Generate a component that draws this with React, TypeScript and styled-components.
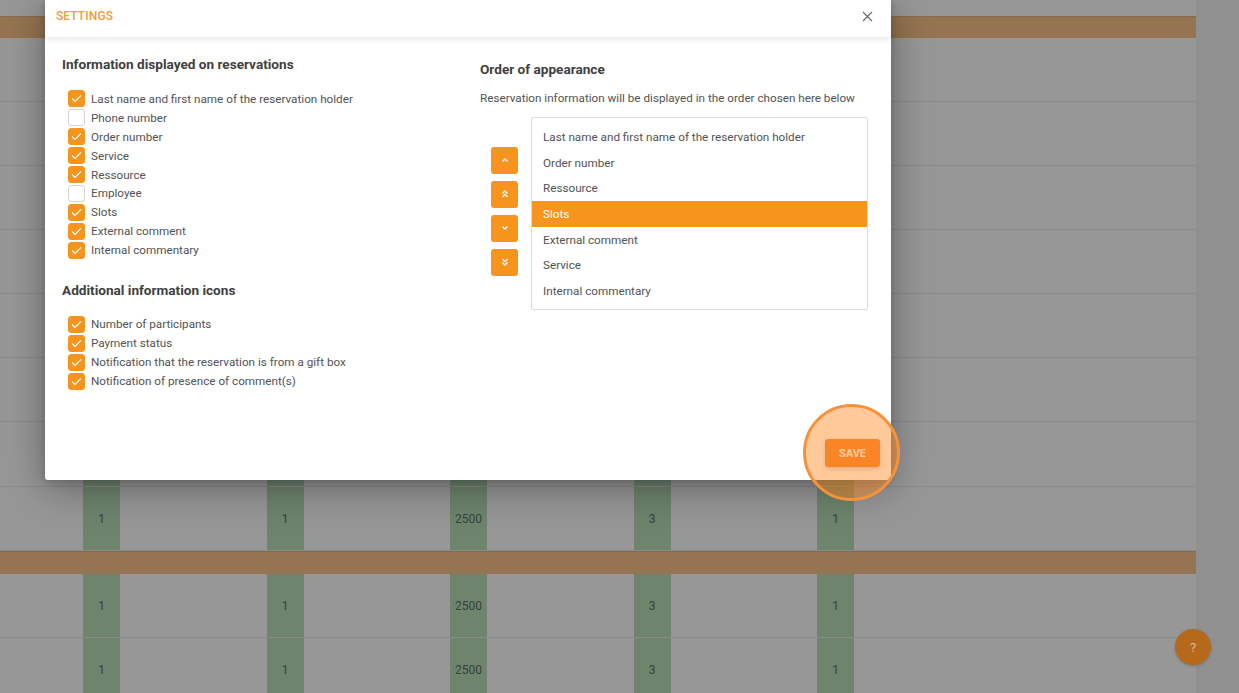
import styled, { createGlobalStyle } from 'styled-components';

const GlobalStyle = createGlobalStyle`
    html, body {
        margin: 0;
        padding: 0;
    }
    body {
        font-family: Roboto, 'Liberation Sans', sans-serif;
        overflow: hidden;
    }
`;

const ORANGE = '#f7941e';

const infoFields = [
    { label: 'Last name and first name of the reservation holder', checked: true },
    { label: 'Phone number', checked: false },
    { label: 'Order number', checked: true },
    { label: 'Service', checked: true },
    { label: 'Ressource', checked: true },
    { label: 'Employee', checked: false },
    { label: 'Slots', checked: true },
    { label: 'External comment', checked: true },
    { label: 'Internal commentary', checked: true },
];

const iconFields = [
    'Number of participants',
    'Payment status',
    'Notification that the reservation is from a gift box',
    'Notification of presence of comment(s)',
];

const order = [
    'Last name and first name of the reservation holder',
    'Order number',
    'Ressource',
    'Slots',
    'External comment',
    'Service',
    'Internal commentary',
];

const rowValues = ['1', '1', '2500', '3', '1'];

// rows hidden behind the dialog keep their cells but show no values
type Row = { kind: 'row' | 'bar'; height: number; hidden?: boolean };

const rows: Row[] = [
    { kind: 'row', height: 64, hidden: true },
    { kind: 'row', height: 64, hidden: true },
    { kind: 'row', height: 64, hidden: true },
    { kind: 'row', height: 64, hidden: true },
    { kind: 'row', height: 64, hidden: true },
    { kind: 'row', height: 64, hidden: true },
    { kind: 'row', height: 65, hidden: true },
    { kind: 'row', height: 64 },
    { kind: 'bar', height: 23 },
    { kind: 'row', height: 64 },
    { kind: 'row', height: 64 },
];

const Check = () => (
    <svg width="11" height="9" viewBox="0 0 11 9">
        <polyline points="1,4.5 4,7.5 10,1.5" fill="none" stroke="#fff" strokeWidth="1.1" />
    </svg>
);

const Chevron = ({ dir, double }: { dir: 'up' | 'down'; double?: boolean }) => {
    const flip = dir === 'down' ? 'scale(1,-1) translate(0,-10)' : undefined;
    return (
        <svg width="8" height="10" viewBox="0 0 8 10">
            <g transform={flip} fill="none" stroke="#fff" strokeWidth="1.3">
                {double ? (
                    <>
                        <polyline points="1.5,4.5 4,2 6.5,4.5" />
                        <polyline points="1.5,8 4,5.5 6.5,8" />
                    </>
                ) : (
                    <polyline points="1.5,6.5 4,4 6.5,6.5" />
                )}
            </g>
        </svg>
    );
};

const App = () => {
    return (
        <Page>
            <GlobalStyle />
            <Board>
                <TopGap />
                <Bar $height={22} />
                {rows.map((row, i) =>
                    row.kind === 'bar' ? (
                        <Bar key={i} $height={row.height} />
                    ) : (
                        <TableRow key={i} $height={row.height}>
                            {rowValues.map((v, j) => (
                                <GreenCell key={j}>{row.hidden ? null : v}</GreenCell>
                            ))}
                        </TableRow>
                    )
                )}
            </Board>
            <SideStrip />

            <Modal>
                <ModalHeader>
                    <ModalTitle>SETTINGS</ModalTitle>
                    <CloseButton>
                        <svg width="11" height="11" viewBox="0 0 11 11">
                            <path d="M1 1 L10 10 M10 1 L1 10" stroke="#666" strokeWidth="1.1" />
                        </svg>
                    </CloseButton>
                </ModalHeader>

                <ModalBody>
                    <LeftColumn>
                        <SectionTitle>Information displayed on reservations</SectionTitle>
                        <CheckList>
                            {infoFields.map((f) => (
                                <CheckRow key={f.label}>
                                    <Box $checked={f.checked}>{f.checked && <Check />}</Box>
                                    <Label>{f.label}</Label>
                                </CheckRow>
                            ))}
                        </CheckList>

                        <SectionTitle $spaced>Additional information icons</SectionTitle>
                        <CheckList>
                            {iconFields.map((label) => (
                                <CheckRow key={label}>
                                    <Box $checked>
                                        <Check />
                                    </Box>
                                    <Label>{label}</Label>
                                </CheckRow>
                            ))}
                        </CheckList>
                    </LeftColumn>

                    <RightColumn>
                        <SectionTitle>Order of appearance</SectionTitle>
                        <Description>Reservation information will be displayed in the order chosen here below</Description>
                        <OrderArea>
                            <ArrowStack>
                                <ArrowButton>
                                    <Chevron dir="up" />
                                </ArrowButton>
                                <ArrowButton>
                                    <Chevron dir="up" double />
                                </ArrowButton>
                                <ArrowButton>
                                    <Chevron dir="down" />
                                </ArrowButton>
                                <ArrowButton>
                                    <Chevron dir="down" double />
                                </ArrowButton>
                            </ArrowStack>
                            <OrderList>
                                {order.map((item) => (
                                    <OrderItem key={item} $selected={item === 'Slots'}>
                                        {item}
                                    </OrderItem>
                                ))}
                            </OrderList>
                        </OrderArea>
                    </RightColumn>
                </ModalBody>

                <ModalFooter>
                    <SaveWrap>
                        <SaveButton>SAVE</SaveButton>
                        <Highlight />
                    </SaveWrap>
                </ModalFooter>
            </Modal>

            <HelpButton>?</HelpButton>
        </Page>
    );
};

export default App;

const Page = styled.div`
    position: relative;
    width: 1239px;
    height: 693px;
    overflow: hidden;
    display: flex;
    background: #979797;
`;

const Board = styled.div`
    width: 1196px;
    display: flex;
    flex-direction: column;
    background: #979797;
`;

const SideStrip = styled.div`
    flex: 1;
    background: #909090;
`;

const TopGap = styled.div`
    height: 16px;
    flex-shrink: 0;
`;

const Bar = styled.div<{ $height: number }>`
    height: ${(p) => p.$height}px;
    flex-shrink: 0;
    background: #957451;
    border-top: 1px solid #876b51;
    box-sizing: border-box;
`;

const TableRow = styled.div<{ $height: number }>`
    height: ${(p) => p.$height}px;
    flex-shrink: 0;
    box-sizing: border-box;
    border-bottom: 1px solid #8b8b8b;
    display: flex;
    padding-left: 83px;
    gap: 146.5px;
`;

const GreenCell = styled.div`
    width: 37px;
    background: #6e846d;
    display: flex;
    align-items: center;
    justify-content: center;
    font-size: 12px;
    color: #37423a;
`;

const Modal = styled.div`
    position: absolute;
    left: 45px;
    top: 0;
    width: 846px;
    height: 480px;
    background: #fff;
    display: flex;
    flex-direction: column;
    box-shadow: 0 8px 40px rgba(0, 0, 0, 0.35), 0 2px 8px rgba(0, 0, 0, 0.15);
    border-radius: 0 0 3px 3px;
`;

const ModalHeader = styled.div`
    height: 38px;
    flex-shrink: 0;
    display: flex;
    align-items: center;
    justify-content: space-between;
    padding: 0 18px 5px 11px;
    box-shadow: 0 2px 6px rgba(0, 0, 0, 0.08);
    border-bottom: 1px solid #f0f0f0;
    box-sizing: border-box;
`;

const ModalTitle = styled.div`
    font-size: 12px;
    font-weight: 500;
    color: #f39a33;
    letter-spacing: 0.1px;
`;

const CloseButton = styled.div`
    display: flex;
    align-items: center;
`;

const ModalBody = styled.div`
    display: flex;
    padding: 18px 23px 0 17px;
`;

const LeftColumn = styled.div`
    width: 418px;
    display: flex;
    flex-direction: column;
`;

const RightColumn = styled.div`
    flex: 1;
    display: flex;
    flex-direction: column;
    padding-top: 5px;
`;

const SectionTitle = styled.div<{ $spaced?: boolean }>`
    font-size: 13.6px;
    font-weight: 700;
    color: #3f4042;
    line-height: 16px;
    margin-top: ${(p) => (p.$spaced ? '22px' : '0')};
`;

const CheckList = styled.div`
    display: flex;
    flex-direction: column;
    margin-top: 17.5px;
    padding-left: 6px;
`;

const CheckRow = styled.div`
    height: 18.9px;
    display: flex;
    align-items: center;
    gap: 6px;
`;

const Box = styled.div<{ $checked?: boolean }>`
    width: 17px;
    height: 17px;
    flex-shrink: 0;
    box-sizing: border-box;
    border-radius: 3px;
    background: ${(p) => (p.$checked ? ORANGE : '#fff')};
    border: 1px solid ${(p) => (p.$checked ? ORANGE : '#d4d4d4')};
    display: flex;
    align-items: center;
    justify-content: center;
`;

const Label = styled.span`
    font-size: 11.7px;
    color: #525355;
`;

const Description = styled.div`
    margin-top: 13px;
    font-size: 11.7px;
    line-height: 16px;
    color: #525355;
`;

const OrderArea = styled.div`
    margin-top: 11px;
    display: flex;
    align-items: center;
    gap: 13px;
    padding-left: 11px;
`;

const ArrowStack = styled.div`
    display: flex;
    flex-direction: column;
    gap: 7px;
    margin-bottom: 4px;
`;

const ArrowButton = styled.div`
    width: 27px;
    height: 27px;
    border-radius: 3px;
    background: ${ORANGE};
    display: flex;
    align-items: center;
    justify-content: center;
`;

const OrderList = styled.div`
    flex: 1;
    border: 1px solid #dcdcdc;
    border-radius: 2px;
    padding: 6px 0 5px;
    display: flex;
    flex-direction: column;
`;

const OrderItem = styled.div<{ $selected?: boolean }>`
    height: 25.7px;
    display: flex;
    align-items: center;
    padding-left: 11px;
    font-size: 11.7px;
    color: ${(p) => (p.$selected ? '#fff' : '#525355')};
    background: ${(p) => (p.$selected ? ORANGE : 'transparent')};
`;

const ModalFooter = styled.div`
    margin-top: auto;
    display: flex;
    justify-content: flex-end;
    padding: 0 11px 13px 0;
`;

const SaveWrap = styled.div`
    position: relative;
`;

const SaveButton = styled.div`
    width: 55px;
    height: 28px;
    border-radius: 3px;
    background: #f5822a;
    color: #fff;
    font-size: 11px;
    font-weight: 700;
    display: flex;
    align-items: center;
    justify-content: center;
    box-shadow: 0 2px 4px rgba(0, 0, 0, 0.2);
`;

const Highlight = styled.div`
    position: absolute;
    left: 50%;
    top: 50%;
    width: 97px;
    height: 97px;
    margin: -49px 0 0 -50px;
    box-sizing: border-box;
    border-radius: 50%;
    border: 3px solid #f7923a;
    background: rgba(255, 137, 35, 0.46);
`;

const HelpButton = styled.div`
    position: absolute;
    left: 1175px;
    top: 629px;
    width: 36px;
    height: 36px;
    border-radius: 50%;
    background: #b5691b;
    color: #e0b88a;
    font-size: 13px;
    display: flex;
    align-items: center;
    justify-content: center;
    box-shadow: 0 1px 3px rgba(0, 0, 0, 0.2);
`;
